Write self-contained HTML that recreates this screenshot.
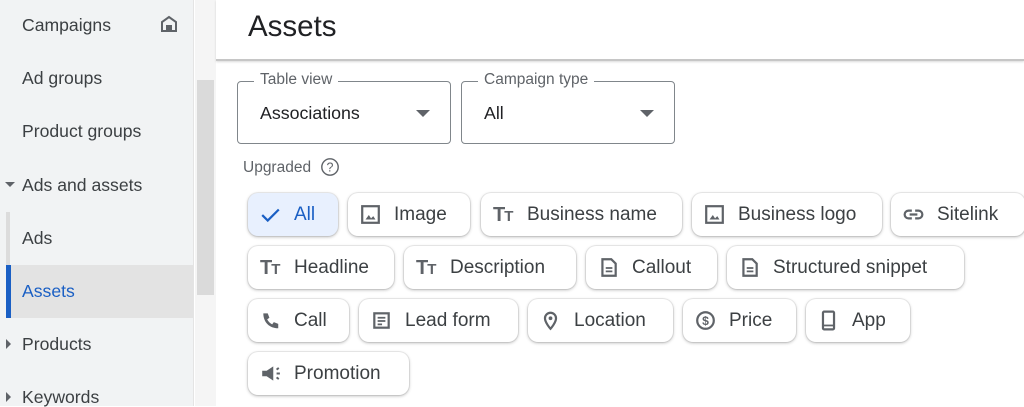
<!DOCTYPE html>
<html><head><meta charset="utf-8"><style>
*{margin:0;padding:0;box-sizing:border-box}
body{width:1024px;height:406px;overflow:hidden;position:relative;background:#fff;font-family:"Liberation Sans",Arial,sans-serif;color:#3c4043}
.sb{position:absolute;left:0;top:0;width:194px;height:406px;background:#f1f3f4;border-right:1px solid #e4e4e4}
.it{position:absolute;left:22px;font-size:17.6px;color:#3c4043;line-height:20px}
.tri{position:absolute;left:5px;width:0;height:0}
.scr{position:absolute;left:195px;top:0;width:21px;height:406px;background:#f5f5f5}
.thumb{position:absolute;left:197px;top:80px;width:17px;height:215px;background:#dadada}
.hdr{position:absolute;left:216px;top:0;width:808px;height:61px;border-bottom:2px solid #c6c6c6;box-shadow:0 1px 2px rgba(0,0,0,.15)}
.hdr span{position:absolute;left:32px;top:10px;font-size:29.5px;color:#202124}
.dd{position:absolute;top:81px;height:63px;border:1px solid #80868b;border-radius:4px}
.dd .lb{position:absolute;top:-11px;left:16px;background:#fff;padding:0 6px;font-size:15.5px;color:#5f6368}
.dd .v{position:absolute;left:22px;top:21px;font-size:17.8px;color:#202124}
.dd .ar{position:absolute;right:20px;top:28px;border-left:7px solid transparent;border-right:7px solid transparent;border-top:7px solid #5f6368}
.chip{position:absolute;height:43px;border-radius:10px;background:#fff;box-shadow:0 1px 3px rgba(0,0,0,.28),0 0 0 1px rgba(0,0,0,.06);font-size:19px;color:#3c4043}
.chip svg{position:absolute;left:12px;top:11px;width:21px;height:21px}
.chip span{position:absolute;left:46px;top:11px;white-space:nowrap}
.tt{position:absolute;left:12px;top:11px;font-weight:bold;font-size:20px;color:#5f6368;letter-spacing:-1px}
.tt small{font-size:15px}
</style></head><body>
<div class="sb"></div>
<div class="it" style="top:15px">Campaigns</div>
<svg style="position:absolute;left:160px;top:15px" width="18" height="18" viewBox="0 0 18 18"><path d="M2 16V7L9 2l7 5v9z" fill="none" stroke="#5f6368" stroke-width="2"/><rect x="6" y="10" width="6" height="6" fill="#5f6368"/></svg>
<div class="it" style="top:68px">Ad groups</div>
<div class="it" style="top:121px">Product groups</div>
<div class="tri" style="top:182px;border-left:5px solid transparent;border-right:5px solid transparent;border-top:5px solid #5f6368"></div>
<div class="it" style="top:175px">Ads and assets</div>
<div style="position:absolute;left:6px;top:212px;width:4px;height:53px;background:#dcdcdc"></div>
<div class="it" style="top:228px">Ads</div>
<div style="position:absolute;left:6px;top:265px;width:187px;height:53px;background:#e3e3e3"></div>
<div style="position:absolute;left:6px;top:265px;width:5px;height:53px;background:#1a5fc4"></div>
<div class="it" style="top:281px;color:#1a5fc4">Assets</div>
<div class="tri" style="top:339px;left:6px;border-top:5px solid transparent;border-bottom:5px solid transparent;border-left:5px solid #5f6368"></div>
<div class="it" style="top:334px">Products</div>
<div class="tri" style="top:392px;left:6px;border-top:5px solid transparent;border-bottom:5px solid transparent;border-left:5px solid #5f6368"></div>
<div class="it" style="top:387px">Keywords</div>
<div class="scr"></div><div class="thumb"></div>
<div class="hdr"><span>Assets</span></div>
<div class="dd" style="left:237px;width:214px"><div class="lb">Table view</div><div class="v">Associations</div><div class="ar"></div></div>
<div class="dd" style="left:461px;width:214px"><div class="lb">Campaign type</div><div class="v">All</div><div class="ar"></div></div>
<div style="position:absolute;left:243px;top:159px;font-size:15.5px;color:#5f6368">Upgraded</div>
<svg style="position:absolute;left:320px;top:157px" width="20" height="20" viewBox="0 0 20 20"><circle cx="10" cy="10" r="8.2" fill="none" stroke="#5f6368" stroke-width="1.4"/><text x="10" y="14.5" font-size="12.5" text-anchor="middle" fill="#5f6368" font-family="Liberation Sans">?</text></svg>

<div class="chip" style="left:248px;top:193px;width:90px;background:#e8f0fe"><svg viewBox="0 0 19 19"><path d="M2 10l5 5L17 5" fill="none" stroke="#1a5fc4" stroke-width="2"/></svg><span style="color:#1a5fc4">All</span></div>
<div class="chip" style="left:348px;top:193px;width:122px"><svg viewBox="0 0 19 19"><rect x="2" y="2" width="15" height="15" fill="none" stroke="#5f6368" stroke-width="2"/><path d="M5 14l3-4 2 3 2-2 2 3z" fill="#5f6368"/></svg><span>Image</span></div>
<div class="chip" style="left:481px;top:193px;width:201px"><div class="tt">T<small>T</small></div><span>Business name</span></div>
<div class="chip" style="left:692px;top:193px;width:190px"><svg viewBox="0 0 19 19"><rect x="2" y="2" width="15" height="15" fill="none" stroke="#5f6368" stroke-width="2"/><path d="M5 14l3-4 2 3 2-2 2 3z" fill="#5f6368"/></svg><span>Business logo</span></div>
<div class="chip" style="left:891px;top:193px;width:134px"><svg viewBox="0 0 19 19"><path d="M8 6H5a3.5 3.5 0 0 0 0 7h3M11 6h3a3.5 3.5 0 0 1 0 7h-3M6 9.5h7" fill="none" stroke="#5f6368" stroke-width="2"/></svg><span>Sitelink</span></div>

<div class="chip" style="left:248px;top:246px;width:146px"><div class="tt">T<small>T</small></div><span>Headline</span></div>
<div class="chip" style="left:404px;top:246px;width:172px"><div class="tt">T<small>T</small></div><span>Description</span></div>
<div class="chip" style="left:586px;top:246px;width:131px"><svg viewBox="0 0 19 19"><path d="M4 2h8l4 4v11H4z" fill="none" stroke="#5f6368" stroke-width="2"/><path d="M7 10h6M7 13h6" stroke="#5f6368" stroke-width="1.6"/></svg><span>Callout</span></div>
<div class="chip" style="left:727px;top:246px;width:237px"><svg viewBox="0 0 19 19"><path d="M4 2h8l4 4v11H4z" fill="none" stroke="#5f6368" stroke-width="2"/><path d="M7 10h6M7 13h6" stroke="#5f6368" stroke-width="1.6"/></svg><span>Structured snippet</span></div>

<div class="chip" style="left:248px;top:299px;width:101px"><svg viewBox="0 0 19 19"><path d="M3 3h4l1.5 4-2 1.5c1 2 2.5 3.5 4.5 4.5l1.5-2 4 1.5v4c-8 0-13.5-5.5-13.5-13.5z" fill="#5f6368"/></svg><span>Call</span></div>
<div class="chip" style="left:359px;top:299px;width:159px"><svg viewBox="0 0 19 19"><rect x="3" y="3" width="13" height="13" fill="none" stroke="#5f6368" stroke-width="2"/><path d="M6 7h7M6 10h7M6 13h4" stroke="#5f6368" stroke-width="1.6"/></svg><span>Lead form</span></div>
<div class="chip" style="left:528px;top:299px;width:145px"><svg viewBox="0 0 19 19"><path d="M9.5 17s-5-5.5-5-9.5a5 5 0 0 1 10 0c0 4-5 9.5-5 9.5z" fill="none" stroke="#5f6368" stroke-width="2"/><circle cx="9.5" cy="7.5" r="1.7" fill="#5f6368"/></svg><span>Location</span></div>
<div class="chip" style="left:683px;top:299px;width:113px"><svg viewBox="0 0 19 19"><circle cx="9.5" cy="9.5" r="7.5" fill="none" stroke="#5f6368" stroke-width="2"/><text x="9.5" y="13.5" font-size="11" font-weight="bold" text-anchor="middle" fill="#5f6368" font-family="Liberation Sans">$</text></svg><span>Price</span></div>
<div class="chip" style="left:806px;top:299px;width:104px"><svg viewBox="0 0 19 19"><rect x="4.5" y="1.5" width="10" height="16" rx="1" fill="none" stroke="#5f6368" stroke-width="2"/><path d="M5 14h9" stroke="#5f6368" stroke-width="1.6"/></svg><span>App</span></div>

<div class="chip" style="left:248px;top:352px;width:161px"><svg viewBox="0 0 19 19"><path d="M2 7h4l6-4v13l-6-4H2z" fill="#5f6368"/><path d="M15 6l2-1.5M15 9.5h3M15 13l2 1.5" stroke="#5f6368" stroke-width="1.8"/></svg><span>Promotion</span></div>
</body></html>
